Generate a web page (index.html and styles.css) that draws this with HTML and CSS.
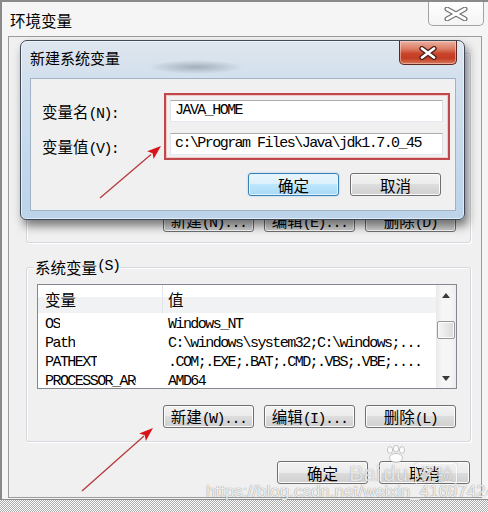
FILE: index.html
```html
<!DOCTYPE html>
<html lang="zh-CN">
<head>
<meta charset="utf-8">
<title>环境变量</title>
<link rel="stylesheet" href="styles.css">
</head>
<body>
<div class="screen">
  <div class="win">
    <div class="titlebar">
      <span class="win-title">环境变量</span>
      <div class="win-close">
        <svg width="24" height="14" viewBox="0 0 24 14"><path class="x-out" d="M3 2 L21 12 M3 12 L21 2"/><path class="x-in" d="M3 2 L21 12 M3 12 L21 2"/></svg>
      </div>
    </div>
    <div class="client">
      <fieldset class="group group-user">
        <legend>Administrator 的用户变量<span class="a">(U)</span></legend>
        <div class="list list-user">
          <div class="list-main">
            <div class="lv-head"><div class="c1">变量</div><div class="c2">值</div></div>
          </div>
        </div>
        <div class="btn-row">
          <button class="btn">新建<span class="a">(N)...</span></button>
          <button class="btn">编辑<span class="a">(E)...</span></button>
          <button class="btn">删除<span class="a">(D)</span></button>
        </div>
      </fieldset>

      <fieldset class="group group-sys">
        <legend>系统变量<span class="a">(S)</span></legend>
        <div class="list list-sys">
          <div class="list-main">
            <div class="lv-head"><div class="c1">变量</div><div class="c2">值</div></div>
            <div class="lv-body">
              <div class="lv-row"><div class="c1 a"><span class="cell">OS</span></div><div class="c2 a">Windows_NT</div></div>
              <div class="lv-row"><div class="c1 a"><span class="cell">Path</span></div><div class="c2 a">C:\windows\system32;C:\windows;...</div></div>
              <div class="lv-row"><div class="c1 a"><span class="cell">PATHEXT</span></div><div class="c2 a">.COM;.EXE;.BAT;.CMD;.VBS;.VBE;....</div></div>
              <div class="lv-row"><div class="c1 a"><span class="cell">PROCESSOR_ARCHITECTURE</span></div><div class="c2 a">AMD64</div></div>
            </div>
          </div>
          <div class="scrollbar">
            <div class="sb-btn"><svg width="8" height="5" viewBox="0 0 8 5"><polygon points="0,5 4,0 8,5" fill="#3a3a3a"/></svg></div>
            <div class="sb-track"><div class="sb-thumb"></div></div>
            <div class="sb-btn"><svg width="8" height="5" viewBox="0 0 8 5"><polygon points="0,0 8,0 4,5" fill="#3a3a3a"/></svg></div>
          </div>
        </div>
        <div class="btn-row">
          <button class="btn">新建<span class="a">(W)...</span></button>
          <button class="btn">编辑<span class="a">(I)...</span></button>
          <button class="btn">删除<span class="a">(L)</span></button>
        </div>
      </fieldset>

      <div class="footer">
        <button class="btn">确定</button>
        <button class="btn">取消</button>
      </div>
    </div>
  </div>
  <div class="checker"></div>

  <div class="dialog">
    <div class="dlg-titlebar">
      <span class="dlg-title">新建系统变量</span>
      <div class="dlg-close">
        <svg width="18" height="14" viewBox="0 0 18 14"><path class="xr-out" d="M3 2.5 L15 11.5 M3 11.5 L15 2.5"/><path class="xr-in" d="M3 2.5 L15 11.5 M3 11.5 L15 2.5"/></svg>
      </div>
    </div>
    <div class="dlg-body">
      <div class="form">
        <div class="labels">
          <div class="lbl">变量名<span class="a">(N):</span></div>
          <div class="lbl">变量值<span class="a">(V):</span></div>
        </div>
        <div class="redbox">
          <div class="input a">JAVA_HOME</div>
          <div class="input a">c:\Program Files\Java\jdk1.7.0_45</div>
        </div>
      </div>
      <div class="dlg-buttons">
        <button class="btn btn-default">确定</button>
        <button class="btn">取消</button>
      </div>
    </div>
  </div>

  <svg class="marks" width="488" height="512" viewBox="0 0 488 512">
    <line x1="100" y1="198" x2="151" y2="154.6" stroke="#b63a3a" stroke-width="1.3"/>
    <polygon points="161,146 153.6,158.9 152.6,153.2 147.1,151.3" fill="#d8141a"/>
    <line x1="82" y1="491" x2="144" y2="436" stroke="#b63a3a" stroke-width="1.3"/>
    <polygon points="153,428 145.8,441 144.8,435.3 139.2,433.6" fill="#d8141a"/>
  </svg>

  <div class="wm-baidu">
    <span class="wm-word">Bai</span>
    <span class="wm-du">
      <svg width="26" height="18" viewBox="0 0 26 18"><g fill="rgba(255,255,255,0.8)" stroke="rgba(130,130,130,0.55)" stroke-width="0.8"><ellipse cx="7" cy="5" rx="2.6" ry="3.4"/><ellipse cx="13" cy="3.6" rx="2.6" ry="3.4"/><ellipse cx="19" cy="5" rx="2.6" ry="3.4"/><ellipse cx="13" cy="13" rx="6.5" ry="4.6"/></g></svg>
      <span class="wm-word">du</span>
    </span>
    <span class="wm-jy">经验</span>
  </div>
  <div class="wm-url">https://blog.csdn.net/weixin_41697424</div>
</div>
</body>
</html>
```
FILE: styles.css
```css
* { box-sizing: border-box; }
html, body { margin: 0; padding: 0; }
body {
  width: 488px;
  height: 512px;
  overflow: hidden;
  background: #fff;
  font-family: "Noto Sans CJK SC", "Liberation Sans", sans-serif;
  font-size: 15px;
  color: #000;
}
.a {
  font-family: "Liberation Mono", "DejaVu Sans Mono", monospace;
  font-size: 15px;
  letter-spacing: -1.55px;
}
.screen {
  position: relative;
  width: 488px;
  height: 512px;
  background: #f7f7f7;
}

/* outer window */
.win {
  height: 500px;
  border-top: 2px solid #8a8a8a;
  border-left: 2px solid #8a8a8a;
  border-bottom: 1px solid #8c8c8c;
  background: #f5f5f5;
  padding: 0 6px 1px 6px;
  display: flex;
  flex-direction: column;
}
.titlebar {
  height: 34px;
  flex: none;
  display: flex;
  align-items: flex-start;
  justify-content: space-between;
}
.win-title {
  margin: 9px 0 0 2px;
  line-height: 18px;
  font-size: 15.5px;
}
.win-close {
  width: 56px;
  height: 24px;
  margin-right: -2px;
  border: 1px solid #a2a2a2;
  border-top: none;
  border-radius: 0 0 5px 5px;
  background: linear-gradient(#ffffff, #f4f4f4);
  display: flex;
  align-items: center;
  justify-content: center;
}
.x-out { stroke: #707070; stroke-width: 5; stroke-linecap: round; fill: none; }
.x-in { stroke: #ffffff; stroke-width: 2.6; stroke-linecap: round; fill: none; }

.client {
  height: 462px;
  flex: none;
  border: 1px solid #9c9c9c;
  background: #f0f0f0;
  padding: 7px 10px 0 17px;
  display: flex;
  flex-direction: column;
}

/* group boxes */
.group {
  width: 445px;
  margin: 0;
  border: 1px solid #d3d9de;
  border-radius: 3px;
  box-shadow: inset 1px 1px 0 #fff, 1px 1px 0 #fff;
  padding: 8px 13px 10px 10px;
  min-width: 0;
}
.group legend {
  padding: 0 1px;
  margin-left: -3px;
  height: 18px;
  line-height: 18px;
  font-size: 15.5px;
  display: flex;
  align-items: center;
  white-space: nowrap;
}
.group legend .a { line-height: 18px; }
.group-user { padding-bottom: 10px; }
.group-sys { margin-top: 15px; padding-bottom: 13px; }

/* list view */
.list {
  display: flex;
  border: 1px solid #828790;
  background: #fff;
}
.list-user { height: 123px; }
.list-sys { height: 105px; }
.list-main {
  flex: 1;
  overflow: hidden;
  min-width: 0;
}
.lv-head {
  display: flex;
  height: 28px;
  align-items: center;
  background: linear-gradient(#ffffff 0%, #ffffff 42%, #f1f2f4 42%, #f1f2f4 100%);
  font-size: 15.5px;
}
.c1 {
  width: 125px;
  flex: none;
  padding-left: 7px;
  white-space: nowrap;
  overflow: hidden;
}
.cell {
  display: inline-block;
  max-width: 91px;
  overflow: hidden;
  vertical-align: top;
}
.lv-head .c1 { border-right: 1px solid #e3e5e8; height: 100%; display: flex; align-items: center; }
.c2 {
  flex: 1;
  padding-left: 5px;
  white-space: nowrap;
  overflow: hidden;
}
.lv-body { padding-top: 2px; }
.lv-row {
  display: flex;
  height: 19px;
  line-height: 19px;
}
.scrollbar {
  width: 20px;
  flex: none;
  display: flex;
  flex-direction: column;
  background: linear-gradient(to right, #e9e9e9, #f6f6f6 30%, #f6f6f6 70%, #ececec);
}
.sb-btn {
  height: 20px;
  display: flex;
  align-items: center;
  justify-content: center;
}
.sb-track { flex: 1; padding: 16px 1px 0 1px; }
.sb-thumb {
  height: 18px;
  border: 1px solid #979797;
  border-radius: 2px;
  background: linear-gradient(to right, #f6f6f6, #e8e8e8 50%, #d9d9d9);
  box-shadow: inset 0 0 0 1px #fbfbfb;
}

/* buttons */
.btn-row {
  display: flex;
  justify-content: flex-end;
  gap: 10px;
  margin-top: 16px;
  padding-right: 1px;
}
.btn {
  width: 91px;
  height: 23px;
  padding: 0;
  border: 1px solid #707070;
  border-radius: 3px;
  background: linear-gradient(#f2f2f2 0%, #ebebeb 50%, #dddddd 50%, #cfcfcf 100%);
  box-shadow: inset 0 0 0 1px #fbfbfb;
  font: inherit;
  font-size: 15.5px;
  line-height: 20px;
  color: #000;
  white-space: nowrap;
}
.btn-default {
  border-color: #3c7fb1;
  background: linear-gradient(#eaf6fd 0%, #d9f0fc 50%, #bee6fd 50%, #a7d9f5 100%);
  box-shadow: inset 0 0 0 1px #dff4fe, 0 0 2px #8ccaf2;
}
.footer {
  display: flex;
  justify-content: flex-end;
  gap: 11px;
  margin-top: 19px;
  margin-right: 1px;
}

.checker {
  height: 12px;
  background: repeating-conic-gradient(#a9a9a9 0 25%, #ffffff 0 50%) 0 0 / 2px 2px;
}

/* modal dialog */
.dialog {
  position: absolute;
  left: 20px;
  top: 40px;
  width: 445px;
  height: 180px;
  border: 1px solid #3e4a58;
  border-radius: 7px 7px 6px 6px;
  padding: 0 8px 8px 9px;
  display: flex;
  flex-direction: column;
  background:
    radial-gradient(ellipse 48px 7px at 175px 26px, rgba(70,80,95,0.35), rgba(70,80,95,0) 100%),
    linear-gradient(#dfe6ee 0%, #d3e0ed 20%, #c6d9ec 60%, #bcd3ea 100%);
  box-shadow: inset 0 0 0 1px rgba(255,255,255,0.55), 3px 6px 10px rgba(0,0,0,0.5);
}
.dlg-titlebar {
  height: 37px;
  flex: none;
  display: flex;
  align-items: flex-start;
  justify-content: space-between;
}
.dlg-title {
  margin-top: 8px;
  line-height: 18px;
  font-size: 15px;
}
.dlg-close {
  width: 58px;
  height: 24px;
  margin-right: -1px;
  border: 1px solid #5b271e;
  border-top: none;
  border-radius: 0 0 5px 5px;
  background: linear-gradient(#eab3a4 0%, #dc7a63 35%, #c8442a 55%, #c23c22 75%, #d8795c 100%);
  box-shadow: inset 0 0 0 1px rgba(255,220,210,0.5);
  display: flex;
  align-items: center;
  justify-content: center;
}
.xr-out { stroke: #4a1c14; stroke-width: 5.2; stroke-linecap: round; fill: none; }
.xr-in { stroke: #ffffff; stroke-width: 2.8; stroke-linecap: round; fill: none; }
.dlg-body {
  height: 133px;
  flex: none;
  border: 1px solid #9fb2c6;
  background: #f0f0f0;
  display: flex;
  flex-direction: column;
}
.form {
  display: flex;
  margin-top: 14px;
}
.labels {
  width: 133px;
  padding: 7px 0 0 11px;
  display: flex;
  flex-direction: column;
  gap: 13px;
}
.lbl {
  height: 22px;
  line-height: 22px;
  font-size: 15.5px;
  white-space: nowrap;
}
.redbox {
  width: 286px;
  border: 2px solid #c0484a;
  box-shadow: inset 0 0 0 1px #f0c8c8;
  padding: 5px 5px 3px 4px;
  display: flex;
  flex-direction: column;
  gap: 11px;
}
.input {
  height: 22px;
  line-height: 20px;
  border: 1px solid;
  border-color: #abadb3 #dbdfe6 #e3e9ef #e2e3ea;
  background: #fff;
  padding-left: 4px;
  white-space: nowrap;
  overflow: hidden;
}
.dlg-buttons {
  display: flex;
  justify-content: flex-end;
  gap: 11px;
  margin-top: 13px;
  padding-right: 14px;
}

/* annotations */
.marks {
  position: absolute;
  left: 0;
  top: 0;
  pointer-events: none;
}
.wm-baidu {
  position: absolute;
  left: 349px;
  top: 445px;
  display: flex;
  align-items: flex-end;
  gap: 2px;
  color: rgba(255,255,255,0.8);
  text-shadow: 0 0 1px rgba(90,90,90,0.7);
  font-family: "Liberation Sans", sans-serif;
  pointer-events: none;
}
.wm-word { font-size: 22px; line-height: 22px; }
.wm-du { display: flex; flex-direction: column; align-items: center; }
.wm-jy {
  margin-left: 4px;
  font-family: "Noto Sans CJK SC", sans-serif;
  font-size: 17px;
  line-height: 20px;
  padding: 0 3px;
  border: 1px solid rgba(255,255,255,0.8);
  border-radius: 3px;
  box-shadow: 0 0 1px rgba(90,90,90,0.6);
}
.wm-url {
  position: absolute;
  left: 206px;
  top: 482px;
  font-family: "Liberation Sans", sans-serif;
  font-size: 17px;
  line-height: 20px;
  color: rgba(255,255,255,0.9);
  text-shadow: 0 0 1px rgba(70,70,70,0.8);
  white-space: nowrap;
  pointer-events: none;
}
```
